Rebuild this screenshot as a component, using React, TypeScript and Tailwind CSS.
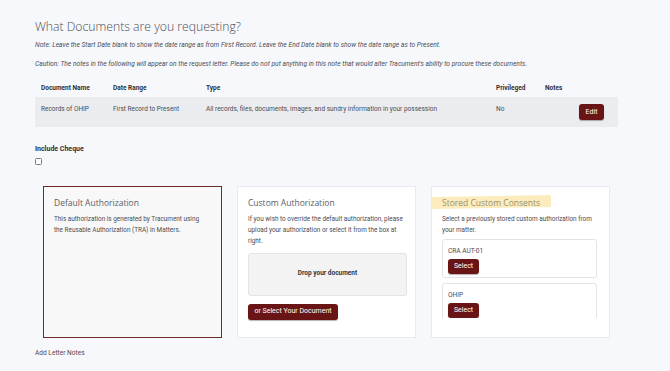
import React from 'react';

const body = { fontFamily: 'Roboto, "Liberation Sans", sans-serif' };
const display = { fontFamily: '"Open Sans", "Noto Sans", sans-serif' };

const btn =
  'block rounded-[3px] bg-[#6a1515] text-center text-white text-[7px] leading-none shadow-[0_1px_1px_rgba(0,0,0,0.3)]';

export default function App() {
  return (
    <div className="min-h-[371px] w-[670px] bg-[#f7f8fb] text-[#3a3d44]" style={body}>
      <div className="pl-[35px] pr-[52px] pt-[18px]">
        <h1 className="text-[12.2px] font-light text-[#4a4d55]" style={display}>
          What Documents are you requesting?
        </h1>
        <p className="mt-[4px] text-[6.7px] italic text-[#4b4f58]">
          Note: Leave the Start Date blank to show the date range as from First Record. Leave the End Date blank to show the date range as to Present.
        </p>
        <p className="mt-[9px] text-[6.7px] italic text-[#4b4f58]">
          Caution: The notes in the following will appear on the request letter. Please do not put anything in this note that would alter Tracument's ability to procure these documents.
        </p>

        {/* Table */}
        <div className="mt-[11px] w-[583px] text-[6.5px]">
          <div className="flex h-[17px] items-center font-bold text-[#2e3138]">
            <div className="w-[78px] pl-[6px]">Document Name</div>
            <div className="w-[93px]">Date Range</div>
            <div className="w-[290px]">Type</div>
            <div className="w-[49px]">Privileged</div>
            <div>Notes</div>
          </div>
          <div className="flex h-[30px] items-start bg-[#ebecef] pt-[7px] text-[#4a4d55]">
            <div className="w-[78px] pl-[6px] pt-[1px]">Records of OHIP</div>
            <div className="w-[93px] pt-[1px]">First Record to Present</div>
            <div className="w-[290px] pt-[1px]">All records, files, documents, images, and sundry information in your possession</div>
            <div className="w-[49px] pt-[1px]">No</div>
            <div className="flex flex-1 justify-end pr-[14px]">
              <button className={`${btn} h-[16px] w-[25px]`}>Edit</button>
            </div>
          </div>
        </div>

        <div className="mt-[17px] text-[7px] font-bold text-[#2e3138]">Include Cheque</div>
        <div className="mt-[3px] h-[7px] w-[7px] rounded-[1.5px] border border-[#777] bg-white" />

        {/* Cards */}
        <div className="mt-[21px] ml-[8px] flex gap-[15px]">
          <div className="h-[152px] w-[179px] border border-[#6f2a2a] bg-[#f8f8f8] px-[10px] pt-[10px]">
            <div className="text-[8.5px] text-[#5a5d64]" style={display}>Default Authorization</div>
            <p className="mt-[4px] text-[6.4px] leading-[11px] text-[#4a4d55]">
              This authorization is generated by Tracument using
              <br />
              the Reusable Authorization (TRA) in Matters.
            </p>
          </div>

          <div className="h-[152px] w-[179px] border border-[#e9eaee] bg-white px-[10px] pt-[10px]">
            <div className="text-[8.5px] text-[#5a5d64]" style={display}>Custom Authorization</div>
            <p className="mt-[4px] text-[6.4px] leading-[11px] text-[#4a4d55]">
              If you wish to override the default authorization, please
              <br />
              upload your authorization or select it from the box at
              <br />
              right.
            </p>
            <div className="mt-[6px] flex h-[43px] w-[159px] items-center justify-center rounded-[3px] border border-[#e4e4e6] bg-[#f3f3f4] text-[6.5px] font-bold text-[#34373d]">
              Drop your document
            </div>
            <button className={`${btn} mt-[8px] h-[16px] w-[90px]`}>or Select Your Document</button>
          </div>

          <div className="h-[152px] w-[179px] border border-[#e9eaee] bg-white pl-[10px] pr-[12px] pt-[10px]">
            <div className="relative">
              <div className="absolute -left-[10px] -top-[1px] h-[12px] w-[119px] -skew-y-[1deg] rounded-[1px] bg-[#fbe7ad] opacity-80" />
              <div className="relative text-[8.5px] text-[#9a8f72]" style={display}>Stored Custom Consents</div>
            </div>
            <p className="mt-[4px] text-[6.4px] leading-[11px] text-[#4a4d55]">
              Select a previously stored custom authorization from
              <br />
              your matter.
            </p>
            <div className="mt-[3px] h-[79px] overflow-hidden">
              <div className="h-[39px] rounded-[3px] border border-[#e2e3e7] bg-white px-[5px] pt-[6px]">
                <div className="text-[6.6px] leading-[10px] text-[#4a4d55]">CRA AUT-01</div>
                <button className={`${btn} mt-[3px] h-[15px] w-[31px]`}>Select</button>
              </div>
              <div className="mt-[5px] h-[39px] rounded-[3px] border border-[#e2e3e7] bg-white px-[5px] pt-[6px]">
                <div className="text-[6.6px] leading-[10px] text-[#4a4d55]">OHIP</div>
                <button className={`${btn} mt-[3px] h-[15px] w-[31px]`}>Select</button>
              </div>
            </div>
          </div>
        </div>

        <div className="mt-[11px] text-[6.6px] text-[#5b4848]">Add Letter Notes</div>
      </div>
    </div>
  );
}
